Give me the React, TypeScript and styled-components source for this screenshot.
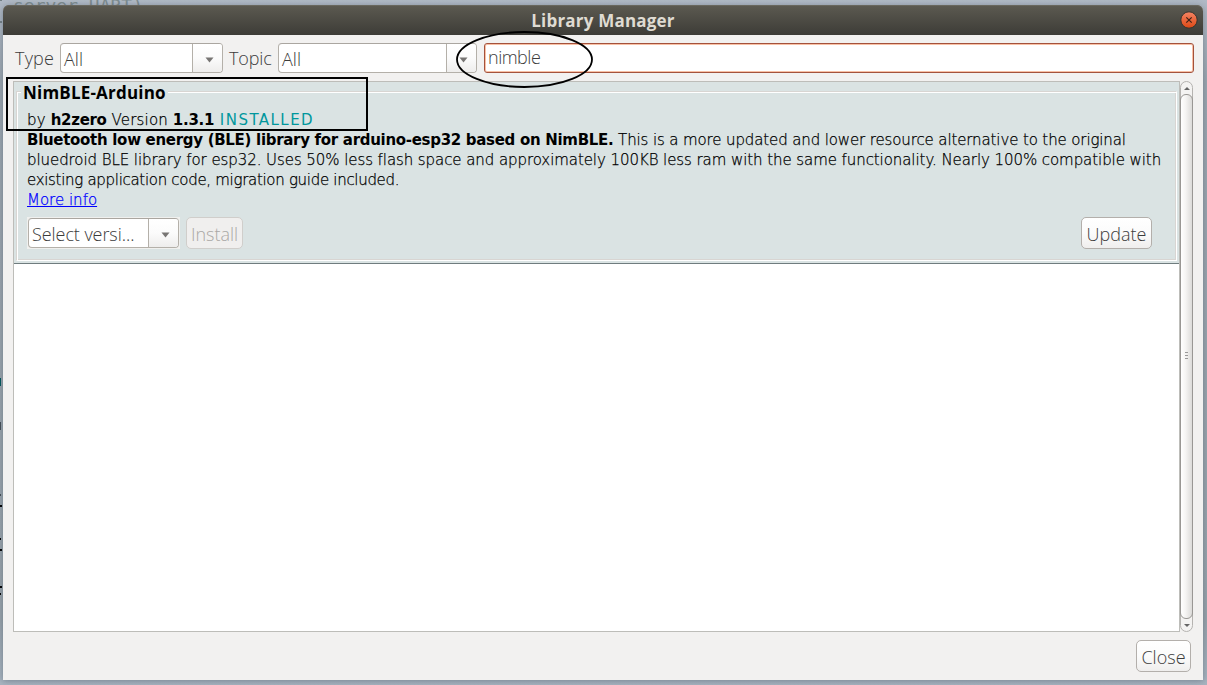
import React from "react";
import styled, { createGlobalStyle } from "styled-components";

const Global = createGlobalStyle`
  * { box-sizing: border-box; }
  html, body, #root { height: 100%; }
  body { margin: 0; overflow: hidden; }
`;

const uiFont = `"Open Sans", "Noto Sans", sans-serif`;
const docFont = `"DejaVu Sans", sans-serif`;

const Desktop = styled.div`
  position: relative;
  width: 1207px;
  height: 685px;
  padding: 5px 4px 5px 3px;
  overflow: hidden;
  background: linear-gradient(#b0b9c5 0, #9ca6af 80px, #98a3ab 620px, #a8b4c0 685px);
`;

const EditorLine = styled.div`
  position: absolute;
  left: 13px;
  top: -4px;
  font: 18px/20px "DejaVu Sans Mono", monospace;
  white-space: pre;
  color: #7e8c90;
`;

const EditorMark = styled.i<{ $y: number; $h: number; $w: number; $c: string }>`
  position: absolute;
  left: 0;
  top: ${(p) => p.$y}px;
  height: ${(p) => p.$h}px;
  width: ${(p) => p.$w}px;
  background: ${(p) => p.$c};
`;

const Window = styled.main`
  position: relative;
  display: flex;
  flex-direction: column;
  width: 1200px;
  height: 675px;
  background: #f2f1f0;
  border-radius: 6px 6px 0 0;
  box-shadow: 0 1px 6px rgba(50, 65, 80, 0.4);
`;

const TitleBar = styled.header`
  position: relative;
  flex: 0 0 30px;
  display: flex;
  align-items: center;
  justify-content: center;
  border-radius: 6px 6px 0 0;
  background: linear-gradient(#5c5a51, #3d3c37);
  box-shadow: inset 0 1px #69675e;
`;

const Title = styled.h1`
  margin: 0;
  padding-top: 1px;
  font: 700 17px/29px ${uiFont};
  letter-spacing: 0.2px;
  color: #dfdbd2;
`;

const CloseIcon = styled.svg`
  position: absolute;
  right: 5px;
  top: 6px;
`;

const Toolbar = styled.div`
  flex: 0 0 46px;
  display: flex;
  align-items: center;
  padding: 4px 9px 4px 12px;
  font: 300 18px/28px ${uiFont};
  color: #3c3c3c;
`;

const Run = styled.span<{ $ls?: number }>`
  letter-spacing: ${(p) => p.$ls || 0}px;
  white-space: pre;
`;

const Label = styled.label<{ $w: number; $ls: number }>`
  width: ${(p) => p.$w}px;
  letter-spacing: ${(p) => p.$ls}px;
  white-space: nowrap;
`;

const Combo = styled.div<{ $w: number; $gap?: number }>`
  display: flex;
  width: ${(p) => p.$w}px;
  height: 30px;
  margin-right: ${(p) => p.$gap || 0}px;
  border: 1px solid #b4b0a9;
  border-top-color: #aaa6a0;
  border-radius: 4px;
  background: #fff;
  overflow: hidden;
  font: 300 18px/30px ${uiFont};
  color: #3c3c3c;
`;

const ComboValue = styled.span<{ $ls?: number }>`
  flex: 1;
  padding-left: 3px;
  letter-spacing: ${(p) => p.$ls || 0}px;
  white-space: nowrap;
`;

const ComboArrow = styled.span`
  flex: 0 0 30px;
  display: flex;
  align-items: center;
  justify-content: center;
  padding: 4px 0 0 3px;
  border-left: 1px solid #b4b0a9;
  background: linear-gradient(#fff, #fbfbfb 50%, #eeedec);
`;

const Search = styled.div`
  flex: 1;
  height: 30px;
  padding-left: 3px;
  border: 1px solid #a4523c;
  border-radius: 3px;
  background: #fff;
  box-shadow: inset 0 0 0 1px #f8c0a5;
  line-height: 26px;
`;

const ListArea = styled.section`
  flex: 0 0 551px;
  display: flex;
  margin: 0 10px;
`;

const List = styled.div`
  width: 1167px;
  border: 1px solid #bdbdb9;
  background: #fff;
`;

const Card = styled.article`
  height: 182px;
  padding: 1px 2px 2px;
  background: #dae3e3;
  border-bottom: 1px solid #6f7c7e;
`;

const Group = styled.fieldset`
  height: 178px;
  min-width: 0;
  margin: 0;
  padding: 0 14px 0 10px;
  border: 1px solid;
  border-color: #d8d5d2 #fff #fff #d8d5d2;
  box-shadow: inset 1px 1px #fff, inset -1px -1px #d8d5d2;
`;

const Legend = styled.legend`
  height: 17px;
  margin-left: -6px;
  padding: 0 2px 0 2px;
  background: #dae3e3;
  font: 700 17px/20px ${uiFont};
  letter-spacing: 0.2px;
  color: #000;
`;

const Description = styled.div`
  height: 100px;
  margin-top: 10px;
  font: 200 15px/20px ${docFont};
  color: #000;
  -webkit-text-stroke: 0.25px;
  b {
    font-weight: 700;
    letter-spacing: -0.3px;
    -webkit-text-stroke: 0;
  }
`;

const Line = styled.div<{ $ls?: number }>`
  height: 20px;
  letter-spacing: ${(p) => p.$ls || 0}px;
  white-space: pre;
`;

const Installed = styled.span`
  color: #00979d;
  letter-spacing: 1.45px;
  font-weight: 400;
  -webkit-text-stroke: 0;
`;

const Link = styled.a`
  color: #00f;
  text-decoration: underline;
`;

const Actions = styled.div`
  display: flex;
  align-items: center;
  height: 32px;
  margin-top: 7px;
  padding-right: 10px;
`;

const ComboFrame = styled.div`
  padding: 1px;
  margin-right: 6px;
  background: #f0f0ee;
`;

const Button = styled.button<{ $w: number; $ls?: number; $off?: boolean }>`
  width: ${(p) => p.$w}px;
  height: 32px;
  padding: 2px 0 0;
  border: 1px solid ${(p) => (p.$off ? "#d0cecb" : "#b3afab")};
  border-radius: 5px;
  background: ${(p) => (p.$off ? "#f0efee" : "linear-gradient(#fff, #fbfbfb 50%, #efeeed)")};
  color: ${(p) => (p.$off ? "#aaa8a5" : "#3c3c3c")};
  font: 300 18px/28px ${uiFont};
  letter-spacing: ${(p) => p.$ls || 0}px;
  white-space: nowrap;
`;

const Spacer = styled.div`
  flex: 1;
`;

const ScrollBar = styled.div`
  display: flex;
  flex-direction: column;
  width: 13px;
  border: 1px solid #b5b3b0;
  border-radius: 7px;
  background: #f4f3f2;
`;

const ScrollArrow = styled.div`
  flex: 0 0 12px;
  display: flex;
  align-items: center;
  justify-content: center;
`;

const Thumb = styled.div`
  flex: 1;
  display: flex;
  align-items: center;
  justify-content: center;
  margin: 0 -1px;
  padding-bottom: 2px;
  border: 1px solid #999794;
  border-radius: 6px;
  background: linear-gradient(90deg, #fff, #f6f5f4 40%, #dcdbd9);
`;

const Footer = styled.footer`
  display: flex;
  justify-content: flex-end;
  padding: 8px 12px 0;
`;

const Marks = styled.svg`
  position: absolute;
  left: 0;
  top: 0;
  pointer-events: none;
`;

const Down = () => (
  <svg width="9" height="6" viewBox="0 0 9 6">
    <path d="M.5.5h8L4.5 5.5z" fill="#777573" />
  </svg>
);

const Tip = ({ up }: { up?: boolean }) => (
  <svg width="6" height="3" viewBox="0 0 6 3">
    <path d={up ? "M0 3h6L3 0z" : "M0 0h6L3 3z"} fill="#666" />
  </svg>
);

export default function App() {
  return (
    <Desktop>
      <Global />
      <EditorLine>server UART)</EditorLine>
      <EditorMark $y={0} $h={1} $w={2} $c="#738085" />
      <EditorMark $y={21} $h={2} $w={2} $c="#738085" />
      <EditorMark $y={378} $h={8} $w={1} $c="#00575b" />
      <EditorMark $y={422} $h={8} $w={1} $c="#454f55" />
      <EditorMark $y={494} $h={2} $w={1} $c="#454f55" />
      <EditorMark $y={505} $h={2} $w={2} $c="#000" />
      <EditorMark $y={538} $h={2} $w={1} $c="#000" />
      <EditorMark $y={549} $h={2} $w={2} $c="#000" />
      <EditorMark $y={586} $h={2} $w={2} $c="#000" />
      <EditorMark $y={593} $h={2} $w={1} $c="#000" />
      <Window>
        <TitleBar>
          <Title>Library Manager</Title>
          <CloseIcon width="18" height="18" viewBox="0 0 18 18">
            <defs>
              <linearGradient id="close" x1="0" y1="0" x2="0" y2="1">
                <stop offset="0" stopColor="#f58464" />
                <stop offset="1" stopColor="#dd4814" />
              </linearGradient>
            </defs>
            <circle cx="9" cy="9" r="8.2" fill="url(#close)" stroke="#35342f" />
            <path d="M6.3 6.3l5.4 5.4m0-5.4l-5.4 5.4" stroke="#3c2118" strokeWidth="1.2" />
          </CloseIcon>
        </TitleBar>
        <Toolbar>
          <Label $w={45} $ls={0.2}>Type</Label>
          <Combo $w={163} $gap={6}>
            <ComboValue>All</ComboValue>
            <ComboArrow><Down /></ComboArrow>
          </Combo>
          <Label $w={49} $ls={-0.15}>Topic</Label>
          <Combo $w={199} $gap={7}>
            <ComboValue>All</ComboValue>
            <ComboArrow><Down /></ComboArrow>
          </Combo>
          <Search><Run $ls={-0.5}>nimble</Run></Search>
        </Toolbar>
        <ListArea>
          <List>
            <Card>
              <Group>
                <Legend>NimBLE-Arduino</Legend>
                <Description>
                  <Line $ls={0.17}>by <b>h2zero</b> Version <b>1.3.1</b><Run $ls={1}> </Run><Installed>INSTALLED</Installed></Line>
                  <Line $ls={-0.13}><b>Bluetooth low energy (BLE) library for arduino-esp32 based on NimBLE.</b><Run $ls={-0.12}> This is a more updated and lower resource alternative to the original</Run></Line>
                  <Line $ls={-0.072}>bluedroid BLE library for esp32. Uses 50% less flash space and approximately 100KB less ram with the same functionality. Nearly 100% compatible with</Line>
                  <Line $ls={-0.3}>existing application code, migration guide included.</Line>
                  <Line><Link>More info</Link></Line>
                </Description>
                <Actions>
                  <ComboFrame>
                    <Combo $w={151}>
                      <ComboValue $ls={-0.07}>Select versi...</ComboValue>
                      <ComboArrow><Down /></ComboArrow>
                    </Combo>
                  </ComboFrame>
                  <Button $w={57} $off>Install</Button>
                  <Spacer />
                  <Button $w={71}>Update</Button>
                </Actions>
              </Group>
            </Card>
          </List>
          <ScrollBar>
            <ScrollArrow><Tip up /></ScrollArrow>
            <Thumb>
              <svg width="3" height="7" viewBox="0 0 3 7">
                <path d="M0 .5h3M0 3.5h3M0 6.5h3" stroke="#999" />
              </svg>
            </Thumb>
            <ScrollArrow><Tip /></ScrollArrow>
          </ScrollBar>
        </ListArea>
        <Footer>
          <Button $w={55}>Close</Button>
        </Footer>
      </Window>
      <Marks width="1207" height="685" viewBox="0 0 1207 685" fill="none" stroke="#000">
        <rect x="7" y="78" width="360" height="52" strokeWidth="2" />
        <ellipse cx="524.5" cy="59.5" rx="67.5" ry="27.5" strokeWidth="1.8" />
      </Marks>
    </Desktop>
  );
}
